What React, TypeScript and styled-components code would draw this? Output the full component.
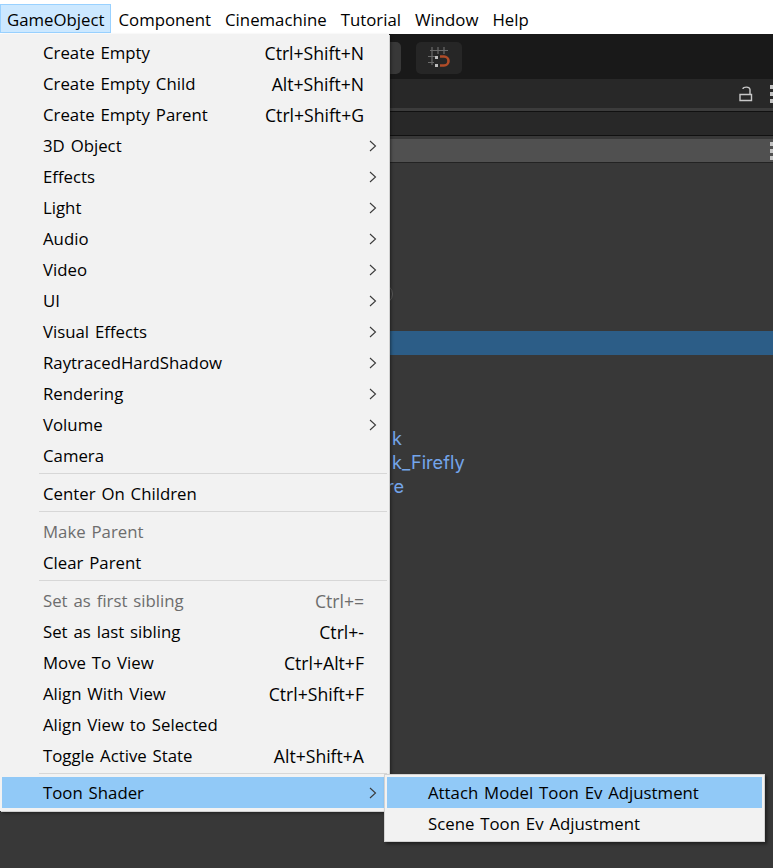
import * as React from "react";
import styled, { createGlobalStyle } from "styled-components";

const GlobalStyle = createGlobalStyle`
  html, body {
    margin: 0;
    padding: 0;
    background: #383838;
  }
`;

const MENU_FONT = `"Open Sans", "Noto Sans", sans-serif`;

const Page = styled.div`
  position: relative;
  width: 773px;
  height: 868px;
  overflow: hidden;
  background: #383838;
  font-family: ${MENU_FONT};
`;

// top menu bar
const MenuBar = styled.div`
  display: flex;
  align-items: flex-start;
  height: 34px;
  padding-top: 4px;
  box-sizing: border-box;
  background: #ffffff;
`;

const MenuTitle = styled.div<{ $open?: boolean }>`
  box-sizing: border-box;
  height: 29px;
  padding: 0 6px;
  border: 1px solid ${(p) => (p.$open ? "#99d1ff" : "transparent")};
  background: ${(p) => (p.$open ? "#cce8ff" : "transparent")};
  font-size: 16.8px;
  line-height: 30px;
  color: #000;
  white-space: nowrap;
`;

// editor chrome behind the menu
const Toolbar = styled.div`
  display: flex;
  justify-content: flex-end;
  gap: 15px;
  height: 45px;
  padding: 8px 311px 0 0;
  box-sizing: border-box;
  background: #191919;
`;

const ToolButton = styled.div<{ $w: number }>`
  display: flex;
  align-items: center;
  justify-content: center;
  width: ${(p) => p.$w}px;
  height: 32px;
  border-radius: 5px;
  background: ${(p) => (p.$w > 46 ? "#383838" : "#262626")};
`;

const PanelHeader = styled.div`
  display: flex;
  align-items: center;
  justify-content: flex-end;
  gap: 17px;
  height: 29px;
  background: #282828;
  border-bottom: 3px solid #3c3c3c;
`;

const SearchBar = styled.div`
  height: 23px;
  background: #282828;
  border-top: 1px solid #111;
  border-bottom: 1px solid #111;
`;

const SceneRow = styled.div`
  display: flex;
  align-items: center;
  justify-content: flex-end;
  height: 23px;
  margin-top: 3px;
  background: #505050;
  border-bottom: 1px solid #232323;
`;

const Dots = styled.div`
  display: flex;
  flex-direction: column;
  gap: 3px;
  margin-right: -1px;
`;

const Dot = styled.span`
  width: 4px;
  height: 4px;
  background: #c4c4c4;
`;

const TreeRow = styled.div<{ $selected?: boolean; $indent?: number }>`
  display: flex;
  align-items: center;
  box-sizing: border-box;
  height: 24px;
  padding: 0 0 3px ${(p) => p.$indent ?? 392}px;
  background: ${(p) => (p.$selected ? "#2c5d87" : "transparent")};
  color: #74a5ea;
  font-family: Inter, "Open Sans", sans-serif;
  font-size: 18.2px;
  white-space: nowrap;
`;

const Ring = styled.span`
  display: block;
  flex: none;
  width: 20px;
  height: 20px;
  border: 1px solid #5a5a5a;
  border-radius: 50%;
  box-sizing: border-box;
`;

// dropdown menus
const Dropdown = styled.div`
  position: absolute;
  left: 0;
  top: 34px;
  width: 389px;
  height: 777px;
  box-sizing: border-box;
  padding: 3px 2px 0;
  background: #f2f2f2;
  box-shadow: 1px 1px 0 #d0d0d0, 2px 2px 3px rgba(0, 0, 0, 0.45);
`;

const SubMenu = styled.div`
  position: absolute;
  left: 384px;
  top: 774px;
  width: 381px;
  height: 68px;
  box-sizing: border-box;
  padding: 2px 2px 0 2px;
  background: #f2f2f2;
  border: 1px solid #d2d2d2;
  box-shadow: 2px 2px 3px rgba(0, 0, 0, 0.45);
`;

const Item = styled.div<{ $active?: boolean; $disabled?: boolean; $sub?: boolean }>`
  display: flex;
  align-items: center;
  height: 31px;
  padding: 0 ${(p) => (p.$sub ? 0 : 23)}px 0 41px;
  position: relative;
  background: ${(p) => (p.$active ? "#91c9f7" : "transparent")};
  color: ${(p) => (p.$disabled ? "#6d6d6d" : "#000")};
  font-size: 16.8px;
  word-spacing: 1.5px;
  white-space: nowrap;
`;

const Label = styled.span`
  flex: 1;
`;

const Shortcut = styled.span`
  font-size: 17.6px;
  word-spacing: 0;
`;

const Arrow = styled.svg`
  position: absolute;
  right: 10px;
  top: 10px;
  width: 8px;
  height: 12px;
`;

const Separator = styled.div`
  height: 7px;
  box-sizing: border-box;
  padding-top: 2px;
  margin: 0 0 0 37px;

  /* the last one is a pixel shorter so the highlight lines up with the submenu */
  &:nth-last-child(2) {
    height: 6px;
  }

  &::after {
    content: "";
    display: block;
    height: 1px;
    background: #d7d7d7;
  }
`;

type Entry =
  | { sep: true }
  | {
      label: string;
      shortcut?: string;
      arrow?: boolean;
      disabled?: boolean;
      active?: boolean;
    };

const entries: Entry[] = [
  { label: "Create Empty", shortcut: "Ctrl+Shift+N" },
  { label: "Create Empty Child", shortcut: "Alt+Shift+N" },
  { label: "Create Empty Parent", shortcut: "Ctrl+Shift+G" },
  { label: "3D Object", arrow: true },
  { label: "Effects", arrow: true },
  { label: "Light", arrow: true },
  { label: "Audio", arrow: true },
  { label: "Video", arrow: true },
  { label: "UI", arrow: true },
  { label: "Visual Effects", arrow: true },
  { label: "RaytracedHardShadow", arrow: true },
  { label: "Rendering", arrow: true },
  { label: "Volume", arrow: true },
  { label: "Camera" },
  { sep: true },
  { label: "Center On Children" },
  { sep: true },
  { label: "Make Parent", disabled: true },
  { label: "Clear Parent" },
  { sep: true },
  { label: "Set as first sibling", shortcut: "Ctrl+=", disabled: true },
  { label: "Set as last sibling", shortcut: "Ctrl+-" },
  { label: "Move To View", shortcut: "Ctrl+Alt+F" },
  { label: "Align With View", shortcut: "Ctrl+Shift+F" },
  { label: "Align View to Selected" },
  { label: "Toggle Active State", shortcut: "Alt+Shift+A" },
  { sep: true },
  { label: "Toon Shader", arrow: true, active: true },
];

const titles = ["GameObject", "Component", "Cinemachine", "Tutorial", "Window", "Help"];

const SnapIcon = () => (
  <svg width="24" height="24" viewBox="0 0 24 24" fill="none">
    <path
      d="M3 4.5h18M1 10.5h8M1 16.5h6M5 1v18M11 1v7M17 1v7"
      stroke="#6a6a6a"
      strokeWidth="1.2"
    />
    <rect x="8" y="10" width="3" height="3" fill="#bdbdbd" />
    <rect x="8" y="18" width="3" height="3" fill="#bdbdbd" />
    <path
      d="M13 10.5h4a4.5 4.5 0 0 1 0 9h-4"
      stroke="#b04c28"
      strokeWidth="2.6"
    />
  </svg>
);

const LockIcon = () => (
  <svg width="14" height="16" viewBox="0 0 14 16" fill="none" stroke="#c8c8c8">
    <path d="M1 8.5h11.5v6H1z" strokeWidth="1.4" />
    <path d="M4 3V2.6C4.5 1 10.5 0 11 3.5V8" strokeWidth="1.4" />
  </svg>
);

const MoreDots = () => (
  <Dots>
    <Dot />
    <Dot />
    <Dot />
  </Dots>
);

const Chevron = () => (
  <Arrow viewBox="0 0 8 12" fill="none">
    <path d="M1 1l5.5 5L1 11" stroke="#3a3a3a" strokeWidth="1.1" />
  </Arrow>
);

const App: React.FC = () => {
  return (
    <Page>
      <GlobalStyle />
      <MenuBar>
        {titles.map((t, i) => (
          <MenuTitle key={t} $open={i === 0}>
            {t}
          </MenuTitle>
        ))}
      </MenuBar>
      <Toolbar>
        <ToolButton $w={60} />
        <ToolButton $w={46}>
          <SnapIcon />
        </ToolButton>
      </Toolbar>
      <PanelHeader>
        <LockIcon />
        <MoreDots />
      </PanelHeader>
      <SearchBar />
      <SceneRow>
        <MoreDots />
      </SceneRow>
      {Array.from({ length: 5 }).map((_, i) => (
        <TreeRow key={i} />
      ))}
      <TreeRow $indent={373}>
        <Ring />
      </TreeRow>
      <TreeRow />
      <TreeRow $selected />
      <TreeRow />
      <TreeRow />
      <TreeRow />
      <TreeRow>k</TreeRow>
      <TreeRow>k_Firefly</TreeRow>
      <TreeRow $indent={387}>re</TreeRow>

      <Dropdown>
        {entries.map((e, i) =>
          "sep" in e ? (
            <Separator key={i} />
          ) : (
            <Item key={e.label} $active={e.active} $disabled={e.disabled}>
              <Label>{e.label}</Label>
              {e.shortcut && <Shortcut>{e.shortcut}</Shortcut>}
              {e.arrow && <Chevron />}
            </Item>
          )
        )}
      </Dropdown>
      <SubMenu>
        <Item $sub $active>
          Attach Model Toon Ev Adjustment
        </Item>
        <Item $sub>Scene Toon Ev Adjustment</Item>
      </SubMenu>
    </Page>
  );
};

export default App;
